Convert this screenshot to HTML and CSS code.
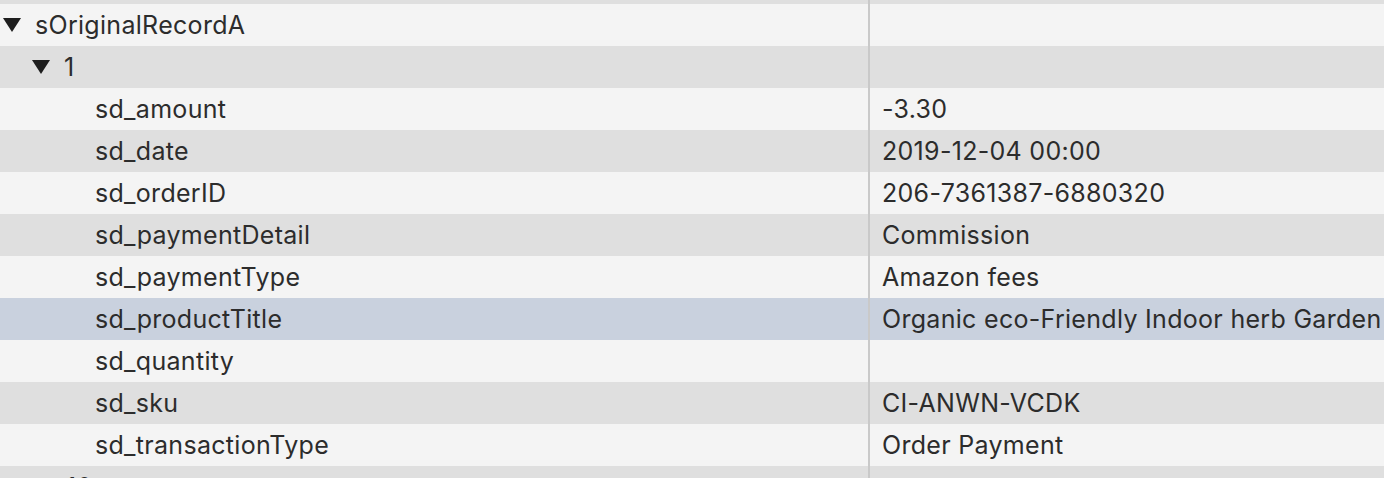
FILE: index.html
```html
<!DOCTYPE html>
<html>
<head>
<meta charset="utf-8">
<link rel="stylesheet" href="styles.css">
</head>
<body>
<div class="tree">
  <div class="row even"><div class="key"></div><div class="val"></div></div>
  <div class="row odd"><div class="key lvl0"><span class="tri down"></span><span>sOriginalRecordA</span></div><div class="val"></div></div>
  <div class="row even"><div class="key lvl1"><span class="tri down"></span><span>1</span></div><div class="val"></div></div>
  <div class="row odd"><div class="key lvl2">sd_amount</div><div class="val">-3.30</div></div>
  <div class="row even"><div class="key lvl2">sd_date</div><div class="val">2019-12-04 00:00</div></div>
  <div class="row odd"><div class="key lvl2">sd_orderID</div><div class="val">206-7361387-6880320</div></div>
  <div class="row even"><div class="key lvl2">sd_paymentDetail</div><div class="val">Commission</div></div>
  <div class="row odd"><div class="key lvl2">sd_paymentType</div><div class="val">Amazon fees</div></div>
  <div class="row selected"><div class="key lvl2">sd_productTitle</div><div class="val">Organic eco-Friendly Indoor herb Garden</div></div>
  <div class="row odd"><div class="key lvl2">sd_quantity</div><div class="val"></div></div>
  <div class="row even"><div class="key lvl2">sd_sku</div><div class="val">CI-ANWN-VCDK</div></div>
  <div class="row odd"><div class="key lvl2">sd_transactionType</div><div class="val">Order Payment</div></div>
  <div class="row even"><div class="key lvl1"><span class="tri right"></span><span>10</span></div><div class="val"></div></div>
</div>
</body>
</html>
```
FILE: styles.css
```css
html, body {
  margin: 0;
  padding: 0;
  background: #f4f4f4;
  overflow: hidden;
  width: 1384px;
  height: 478px;
}
.tree {
  margin-top: -38px;
  font-family: "Inter", "Liberation Sans", sans-serif;
  font-size: 25px;
  letter-spacing: 0.3px;
  color: #2c2c2c;
}
.row {
  display: flex;
  height: 42px;
  align-items: stretch;
}
.row.odd { background: #f4f4f4; }
.row.even { background: #dfdfdf; }
.row.selected { background: #c9d1de; }
.key {
  width: 870px;
  flex: none;
  box-sizing: border-box;
  border-right: 2px solid #c9c9c9;
  display: flex;
  align-items: center;
  white-space: nowrap;
}
.lvl0 { padding-left: 3px; }
.lvl1 { padding-left: 32px; }
.lvl2 { padding-left: 95px; }
.val {
  flex: 1;
  display: flex;
  align-items: center;
  padding-left: 12px;
  white-space: nowrap;
  overflow: hidden;
}
.tri {
  display: inline-block;
  width: 0;
  height: 0;
  margin-right: 14px;
}
.tri.down {
  border-left: 9px solid transparent;
  border-right: 9px solid transparent;
  border-top: 14px solid #1e1e1e;
}
.tri.right {
  border-top: 9px solid transparent;
  border-bottom: 9px solid transparent;
  border-left: 14px solid #1e1e1e;
  margin-left: 2px;
  margin-right: 18px;
}
```
